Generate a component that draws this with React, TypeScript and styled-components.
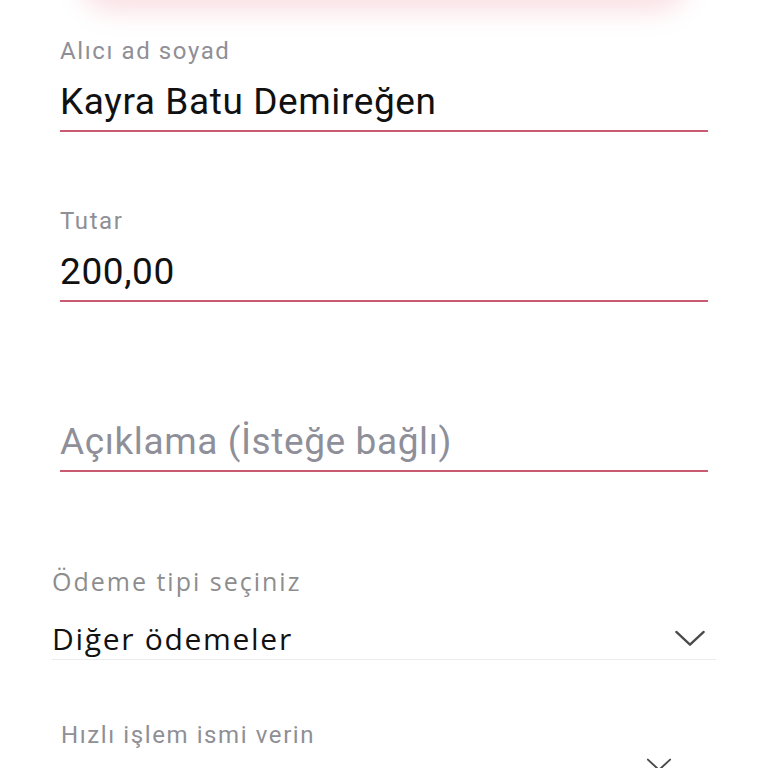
import styled, { createGlobalStyle } from "styled-components";

const GlobalStyle = createGlobalStyle`
  html, body {
    margin: 0;
    padding: 0;
    background: #ffffff;
    overflow: hidden;
  }
  * { box-sizing: border-box; }
`;

const Chevron = ({ size = 32 }: { size?: number }) => (
  <svg width={size} height={size * 0.55} viewBox="0 0 32 18" fill="none">
    <path d="M2 2 L16 15 L30 2" stroke="#4a4a4a" strokeWidth="2.4" strokeLinecap="round" strokeLinejoin="round" />
  </svg>
);

const App = () => {
  return (
    <Screen>
      <GlobalStyle />
      <TopButton />
      <Form>
        <Field>
          <Label>Alıcı ad soyad</Label>
          <Value>Kayra Batu Demireğen</Value>
        </Field>
        <Field>
          <Label>Tutar</Label>
          <Value>200,00</Value>
        </Field>
        <Field>
          <Label />
          <Value $placeholder>Açıklama (İsteğe bağlı)</Value>
        </Field>
      </Form>
      <Select>
        <SelectLabel>Ödeme tipi seçiniz</SelectLabel>
        <SelectRow>
          <SelectValue>Diğer ödemeler</SelectValue>
          <Chevron />
        </SelectRow>
      </Select>
      <Quick>
        <Label>Hızlı işlem ismi verin</Label>
        <QuickRow>
          <Chevron size={26} />
        </QuickRow>
      </Quick>
    </Screen>
  );
};

export default App;

const Screen = styled.div`
  width: 768px;
  height: 768px;
  overflow: hidden;
  display: flex;
  flex-direction: column;
  font-family: Roboto, "Liberation Sans", sans-serif;

  & > * {
    flex-shrink: 0;
  }
`;

const TopButton = styled.div`
  margin: -62px 84px 0;
  height: 60px;
  border-radius: 30px;
  background: #fff;
  box-shadow: 0 8px 24px 6px rgba(236, 130, 148, 0.24);
`;

const Form = styled.div`
  display: flex;
  flex-direction: column;
  gap: 38px;
  padding: 2px 60px 0 60px;
`;

const Field = styled.div`
  display: flex;
  flex-direction: column;
  flex-shrink: 0;
  border-bottom: 2px solid #c95a72;
  height: 132px;
  justify-content: flex-end;
  padding-bottom: 6px;
`;

const Label = styled.div`
  font-size: 24px;
  line-height: 30px;
  letter-spacing: 1.6px;
  color: #8f8f96;
  min-height: 30px;
`;

const Value = styled.div<{ $placeholder?: boolean }>`
  font-size: 37px;
  line-height: 44px;
  letter-spacing: 0.6px;
  margin-top: 14px;
  color: ${(p) => (p.$placeholder ? "#8e8f99" : "#111111")};
`;

const Select = styled.div`
  margin: 94px 52px 0 52px;
  display: flex;
  flex-direction: column;
`;

const SelectLabel = styled.div`
  font-family: "Open Sans", "Noto Sans", sans-serif;
  font-size: 25px;
  line-height: 30px;
  letter-spacing: 2px;
  color: #8d8d8d;
`;

const SelectRow = styled.div`
  display: flex;
  align-items: center;
  justify-content: space-between;
  margin-top: 23px;
  padding: 0 10px 0 0;
  border-bottom: 1.5px solid #ececec;
`;

const SelectValue = styled.div`
  font-family: "Open Sans", "Noto Sans", sans-serif;
  font-size: 30px;
  line-height: 40px;
  letter-spacing: 1.7px;
  color: #111111;
`;

const Quick = styled.div`
  margin: 60px 60px 0 61px;
  display: flex;
  flex-direction: column;
`;

const QuickRow = styled.div`
  display: flex;
  justify-content: flex-end;
  padding-right: 36px;
  margin-top: 8px;
`;
